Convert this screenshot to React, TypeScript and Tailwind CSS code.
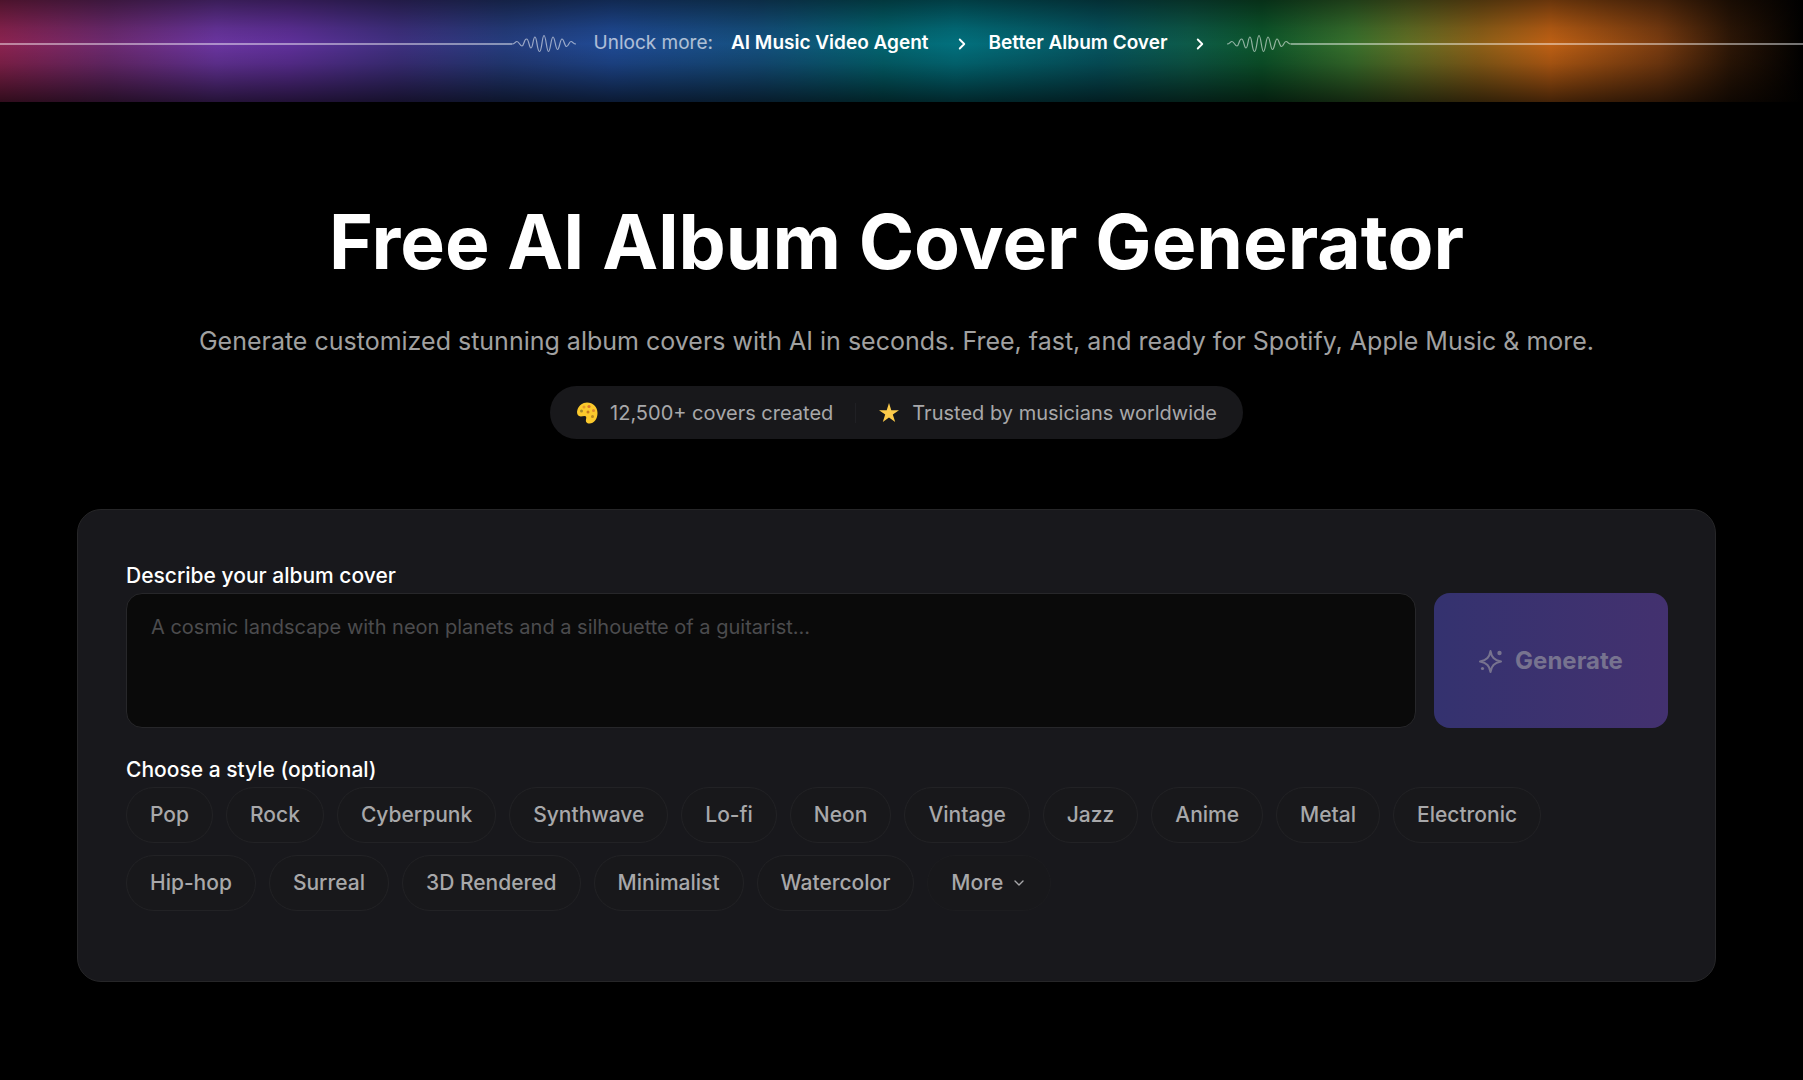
import React, { useState } from 'react';
import { ChevronDown, ChevronRight } from 'lucide-react';

const styles = [
    'Pop', 'Rock', 'Cyberpunk', 'Synthwave', 'Lo-fi', 'Neon', 'Vintage', 'Jazz', 'Anime', 'Metal', 'Electronic',
    'Hip-hop', 'Surreal', '3D Rendered', 'Minimalist', 'Watercolor',
];

const bannerLinks = ['AI Music Video Agent', 'Better Album Cover'];

const Wave = () => (
    <svg viewBox="0 1 64 20" className="h-5 w-16 shrink-0" fill="none" stroke="currentColor" strokeWidth="1.2" strokeLinejoin="round" aria-hidden="true">
        <path d="M0 11C3 11 3 8.500 5 8.500S8 13 10 13S12 6 14.500 6S17 15 19 15S21 4 23 4S25 18.500 27.500 18.500S30 2.500 32 2.500S34.500 18.500 36.500 18.500S39 4 41 4S43.500 16.500 45.500 16.500S48 6 50 6S52.500 13.500 54.500 13.500S57 8.500 59 8.500S61 11 64 11" />
    </svg>
);

const PaletteIcon = () => (
    <svg viewBox="0 0 22 22" className="size-[22px] shrink-0" aria-hidden="true">
        <path d="M11 .5C17 .5 21.500 5 21.500 11C21.500 17 18 21.500 13.500 21.500C10.500 21.500 9.500 19.500 10 17.500C10.500 15.500 10.500 14 8.500 14C6.500 14 5 15 3 14C1 13 .5 10 1.500 7.500C3 3.500 6.500 .5 11 .5Z" fill="#fbc92c" />
        <circle cx="5.500" cy="9" r="1.500" fill="#a58a2a" />
        <circle cx="8" cy="5" r="1.500" fill="#e59a2a" />
        <circle cx="13" cy="4.500" r="1.600" fill="#d9772b" />
        <circle cx="17.500" cy="8.500" r="1.500" fill="#e08a2b" />
        <circle cx="12" cy="10" r="1.500" fill="#c47a20" />
        <circle cx="16.500" cy="14.500" r="1.500" fill="#b98a22" />
    </svg>
);

const StarIcon = () => (
    <svg viewBox="0 0 22 22" className="size-[22px] shrink-0" aria-hidden="true">
        <path d="M11 1L13.300 8.200H21L14.800 12.600L17.200 20L11 15.500L4.800 20L7.200 12.600L1 8.200H8.700Z" fill="#fccb4a" />
    </svg>
);

const SparkleIcon = () => (
    <svg viewBox="0 0 24 24" className="size-6 shrink-0" fill="none" stroke="currentColor" strokeWidth="2" strokeLinejoin="round" aria-hidden="true">
        <path d="M11.500 2C12.500 8 15 11 22 12.500C15 14 12.500 17 11.500 23C10.500 17 8 14 1 12.500C8 11 10.500 8 11.500 2Z" />
        <circle cx="20.500" cy="4" r="2.200" fill="currentColor" stroke="none" />
        <circle cx="3.500" cy="19.500" r="1.600" fill="currentColor" stroke="none" />
    </svg>
);

const Banner = () => (
    <div className="h-[102px] bg-[linear-gradient(180deg,rgba(0,0,0,0.45)_0%,rgba(0,0,0,0.1)_28%,transparent_43%,rgba(0,0,0,0.15)_62%,rgba(0,0,0,0.65)_100%),linear-gradient(90deg,#8c2350_0%,#6d2a70_6%,#6a35a0_12%,#5f309a_16%,#3f3080_22%,#253d7e_28%,#1f4a94_34%,#15507f_42%,#036570_49%,#02707d_53%,#065560_61%,#0d5a48_66%,#0c562b_70%,#38702c_75%,#5f6f25_78%,#8c6018_82%,#be6014_86%,#7a3c10_92%,#2c1606_96%,#000000_100%)]">
        <div className="flex h-[87px] items-center text-[19px] text-white">
            <div className="flex flex-1 items-center text-white/55">
                <span className="h-[2px] flex-1 bg-white/45" />
                <Wave />
            </div>
            <p className="pl-[18px] text-white/65">Unlock more:</p>
            {bannerLinks.map((label) => (
                <a key={label} href="#" className="ml-[18px] flex items-center gap-6 font-semibold">
                    {label}
                    <ChevronRight className="size-[18px]" strokeWidth={2.5} />
                </a>
            ))}
            <div className="flex flex-1 items-center pl-[18px] text-white/55">
                <Wave />
                <span className="h-[2px] flex-1 bg-white/45" />
            </div>
        </div>
    </div>
);

export default function App() {
    const [prompt, setPrompt] = useState('');
    const [selectedStyle, setSelectedStyle] = useState('');

    return (
        <div className="min-h-screen bg-black font-['Inter',sans-serif] text-white">
            <Banner />

            <main className="pr-[87px] pb-24 pl-[77px]">
                <header className="flex flex-col items-center pt-[95px] text-center">
                    <h1 className="text-[75px] leading-[90px] font-bold">Free AI Album Cover Generator</h1>
                    <p className="mt-9 text-[25px] leading-9 text-[#a1a1a1]">
                        Generate customized stunning album covers with AI in seconds. Free, fast, and ready for Spotify, Apple Music &amp; more.
                    </p>
                    <div className="mt-[27px] flex h-[53px] items-center rounded-full bg-[#18181b] px-[26px] text-xl text-[#a8a8aa]">
                        <span className="flex items-center gap-3">
                            <PaletteIcon />
                            12,500+ covers created
                        </span>
                        <span className="mx-[22px] h-5 w-px bg-[#202024]" />
                        <span className="flex items-center gap-3">
                            <StarIcon />
                            Trusted by musicians worldwide
                        </span>
                    </div>
                </header>

                <form
                    className="mt-[70px] rounded-3xl border border-[#262628] bg-[#18181c] pt-12 pr-[47px] pb-[70px] pl-12"
                    onSubmit={(e) => e.preventDefault()}
                >
                    <label htmlFor="prompt" className="block text-[21px] leading-[35px] font-medium">Describe your album cover</label>
                    <div className="flex items-stretch gap-[18px]">
                        <textarea
                            id="prompt"
                            value={prompt}
                            onChange={(e) => setPrompt(e.target.value)}
                            placeholder="A cosmic landscape with neon planets and a silhouette of a guitarist..."
                            className="h-[135px] flex-1 resize-none rounded-2xl border border-[#27272a] bg-[#0a0a0a] px-6 py-[18px] text-xl leading-[30px] placeholder:text-[#4c4c4e] focus:outline-none"
                        />
                        <button
                            type="submit"
                            disabled={!prompt}
                            className="flex w-[234px] items-center justify-center gap-3 rounded-2xl bg-linear-to-r from-[#34326f] to-[#43316f] text-2xl font-bold text-[#77738f]"
                        >
                            <SparkleIcon />
                            Generate
                        </button>
                    </div>

                    <fieldset className="mt-6">
                        <legend className="text-[21px] leading-[35px] font-medium">Choose a style (optional)</legend>
                        <div className="flex flex-wrap gap-x-[13px] gap-y-3">
                            {styles.map((style) => (
                                <button
                                    key={style}
                                    type="button"
                                    aria-pressed={selectedStyle === style}
                                    onClick={() => setSelectedStyle(style)}
                                    className="h-14 rounded-full border border-[#222225] bg-[#18181b] px-[23px] text-[21px] font-medium text-[#a8a8aa]"
                                >
                                    {style}
                                </button>
                            ))}
                            <button type="button" className="flex h-14 items-center gap-2 rounded-full border border-[#1c1c1f] bg-[#18181b] px-[23px] text-[21px] font-medium text-[#a8a8aa]">
                                More
                                <ChevronDown className="size-4" />
                            </button>
                        </div>
                    </fieldset>
                </form>
            </main>
        </div>
    );
}
